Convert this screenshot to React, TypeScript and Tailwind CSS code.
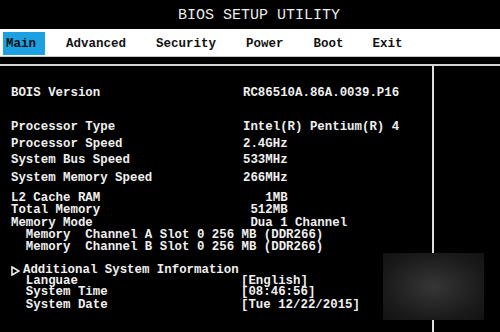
import React from "react";

interface Row {
  label: string;
  value?: string;
  gap: string;
  full?: boolean;
  arrow?: boolean;
}

const rows: Row[] = [
  { label: "BOIS Version", value: "RC86510A.86A.0039.P16", gap: "mt-[22px]" },
  { label: "Processor Type", value: "Intel(R) Pentium(R) 4", gap: "mt-[23px]" },
  { label: "Processor Speed", value: "2.4GHz", gap: "mt-[6px]" },
  { label: "System Bus Speed", value: "533MHz", gap: "mt-[5px]" },
  { label: "System Memory Speed", value: "266MHz", gap: "mt-[7px]" },
  { label: "L2 Cache RAM", value: "   1MB", gap: "mt-[9px]" },
  { label: "Total Memory", value: " 512MB", gap: "mt-[1px]" },
  { label: "Memory Mode", value: " Dua 1 Channel", gap: "mt-[2px]" },
  { label: "  Memory  Channel A Slot 0 256 MB (DDR266)", gap: "mt-[1px]", full: true },
  { label: "  Memory  Channel B Slot 0 256 MB (DDR266)", gap: "mt-[1px]", full: true },
  { label: "Additional System Information", gap: "mt-[12px]", full: true, arrow: true },
  { label: "  Languae", value: "[English]", gap: "mt-0" },
  { label: "  System Time", value: "[08:46:56]", gap: "mt-0" },
  { label: "  System Date", value: "[Tue 12/22/2015]", gap: "mt-[2px]" },
];

const menu = [
  { name: "Advanced", gap: "ml-[21px]" },
  { name: "Security", gap: "ml-[30px]" },
  { name: "Power", gap: "ml-[30px]" },
  { name: "Boot", gap: "ml-[30px]" },
  { name: "Exit", gap: "ml-[29px]" },
];

const App: React.FC = () => {
  return (
    <div className="relative w-[500px] h-[332px] bg-black overflow-hidden font-['Liberation_Mono',monospace] text-[#f0f0f0] flex flex-col">
      {/* title */}
      <div className="h-[29px] pt-[4px] flex items-center justify-center pl-[18px] text-[15px] text-[#ececec] whitespace-pre">
        BIOS SETUP UTILITY
      </div>

      {/* menu bar */}
      <div className="h-[28px] bg-white border-b border-[#c8c8c8] flex items-start text-[12.5px] font-bold text-[#111]">
        <div className="ml-[3px] mt-[3px] w-[42px] h-[23px] bg-[#1ba1e2] pl-[3px] leading-[24px]">
          Main
        </div>
        {menu.map((m) => (
          <div key={m.name} className={`${m.gap} mt-[3px] leading-[24px]`}>
            {m.name}
          </div>
        ))}
      </div>

      <div className="h-[7px]" />
      <div className="h-[2px] bg-[#d6d6d6]" />

      <div className="flex flex-1">
        <div className="w-[432px] flex flex-col text-[12.4px] font-bold">
          {rows.map((r, i) => (
            <div
              key={i}
              className={`${r.gap} h-[11px] leading-[11px] flex whitespace-pre`}
            >
              {r.arrow ? (
                <div className="pl-[11px] flex items-center">
                  <svg width="9" height="10" viewBox="0 0 9 10" className="mr-[3px]">
                    <path d="M1 1 L8 5 L1 9 Z" fill="none" stroke="#f0f0f0" strokeWidth="1.6" />
                  </svg>
                  <span>{r.label}</span>
                </div>
              ) : r.full ? (
                <div className="pl-[11px]">{r.label}</div>
              ) : (
                <>
                  <div className="pl-[11px] w-[243px] shrink-0">{r.label}</div>
                  <div className={i >= 11 ? "-ml-[2px]" : ""}>{r.value}</div>
                </>
              )}
            </div>
          ))}
        </div>
        <div className="w-[2px] bg-[#dedede]" />
        <div className="flex-1" />
      </div>

      {/* blurred watermark patch */}
      <div className="absolute left-[383px] top-[253px] w-[101px] h-[67px] bg-[radial-gradient(ellipse_at_center,#363636,#1a1a1a_70%,#121212)]" />
    </div>
  );
};

export default App;
